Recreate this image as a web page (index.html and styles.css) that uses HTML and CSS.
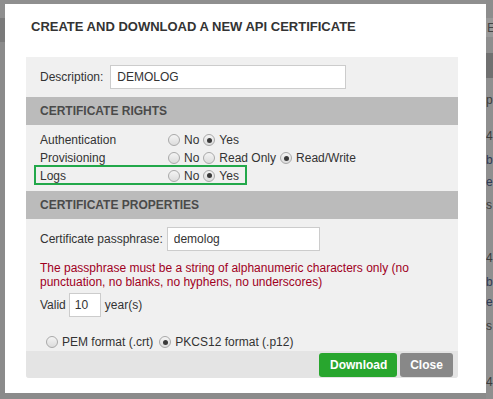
FILE: index.html
```html
<!DOCTYPE html>
<html>
<head>
<meta charset="utf-8">
<link rel="stylesheet" href="styles.css">
</head>
<body>
<div class="page">
  <div class="page-left">
    <div class="bg-top"></div>
    <div class="bg-nav"></div>
    <div class="bg-rest"></div>
  </div>
  <div class="page-right">
    <div class="pr-top"></div>
    <div class="pr-head">E</div>
    <div class="pr-gap"></div>
    <div class="pr-dark"></div>
    <div class="pr-list">
      <div class="pr-line l1">p</div>
      <div class="pr-line l2">4</div>
      <div class="pr-line l3 link">b</div>
      <div class="pr-line l4 link">e</div>
      <div class="pr-line l5">s</div>
      <div class="pr-line l6">4</div>
      <div class="pr-line l7 link">b</div>
      <div class="pr-line l8 link">e</div>
      <div class="pr-line l9">s</div>
      <div class="pr-line l10">4</div>
    </div>
  </div>
</div>

<div class="modal">
  <h1 class="modal-title">CREATE AND DOWNLOAD A NEW API CERTIFICATE</h1>
  <div class="panel">
    <div class="desc-row">
      <label class="desc-label">Description:</label>
      <input class="text-input desc-input" type="text" value="DEMOLOG">
    </div>
    <div class="band">CERTIFICATE RIGHTS</div>
    <div class="rights">
      <div class="right-row">
        <span class="right-label">Authentication</span>
        <span class="opt"><input type="radio" class="radio" name="auth"> No</span>
        <span class="opt"><input type="radio" class="radio" name="auth" checked> Yes</span>
      </div>
      <div class="right-row">
        <span class="right-label">Provisioning</span>
        <span class="opt"><input type="radio" class="radio" name="prov"> No</span>
        <span class="opt"><input type="radio" class="radio" name="prov"> Read Only</span>
        <span class="opt"><input type="radio" class="radio" name="prov" checked> Read/Write</span>
      </div>
      <div class="right-row highlight">
        <span class="right-label">Logs</span>
        <span class="opt"><input type="radio" class="radio" name="logs"> No</span>
        <span class="opt"><input type="radio" class="radio" name="logs" checked> Yes</span>
      </div>
    </div>
    <div class="band">CERTIFICATE PROPERTIES</div>
    <div class="props">
      <div class="pass-row">
        <label class="pass-label">Certificate passphrase:</label>
        <input class="text-input pass-input" type="text" value="demolog">
      </div>
      <p class="warning">The passphrase must be a string of alphanumeric characters only (no punctuation, no blanks, no hyphens, no underscores)</p>
      <div class="valid-row">
        <span>Valid</span>
        <input class="text-input valid-input" type="text" value="10">
        <span class="years">year(s)</span>
      </div>
      <div class="format-row">
        <span class="opt"><input type="radio" class="radio" name="fmt"> PEM format (.crt)</span>
        <span class="opt"><input type="radio" class="radio" name="fmt" checked> PKCS12 format (.p12)</span>
      </div>
    </div>
    <div class="footer">
      <button class="btn btn-download">Download</button>
      <button class="btn btn-close">Close</button>
    </div>
  </div>
</div>
</body>
</html>
```

FILE: styles.css
```css
* { box-sizing: border-box; }
html, body { margin: 0; padding: 0; }
body {
  width: 493px;
  height: 399px;
  overflow: hidden;
  background: #8b8b8b;
  font-family: "Liberation Sans", Arial, sans-serif;
  font-size: 12px;
  color: #333;
  position: relative;
}

/* background page (dimmed) */
.page {
  display: grid;
  grid-template-columns: 486px 1fr;
  height: 399px;
}
.page-left { display: flex; flex-direction: column; }
.bg-top { height: 18px; background: #8f8f8f; }
.bg-nav { height: 24px; background: #7a7a7a; }
.bg-rest { flex: 1; background: #8b8b8b; }

.page-right {
  display: flex;
  flex-direction: column;
  font-family: "Liberation Sans", Arial, sans-serif;
  font-size: 12px;
  color: #3c3c3c;
  overflow: hidden;
}
.pr-top { height: 18px; background: #8d8d8d; }
.pr-head { height: 19px; background: #9a9a9a; line-height: 20px; font-size: 13px; padding-left: 1px; color: #444; }
.pr-gap { height: 16px; background: #8e8e8e; }
.pr-dark { height: 25px; background: #707070; }
.pr-list { flex: 1; background: #8f8f8f; display: flex; flex-direction: column; padding-left: 0; }
.pr-line { height: 14px; line-height: 14px; }
.pr-line.link { color: #2f3a55; }
.l1 { margin-top: 15px; }
.l2 { margin-top: 22px; }
.l3 { margin-top: 10px; }
.l4 { margin-top: 8px; }
.l5 { margin-top: 9px; }
.l6 { margin-top: 39px; }
.l7 { margin-top: 10px; }
.l8 { margin-top: 6px; }
.l9 { margin-top: 10px; }
.l10 { margin-top: 42px; }

/* modal overlay */
.modal {
  position: absolute;
  left: 5px;
  top: 4px;
  width: 481px;
  height: 389px;
  background: #fff;
  padding: 14px 28px 0 21px;
}
.modal-title {
  margin: 0 0 0 5px;
  height: 39px;
  font-size: 13px;
  font-weight: bold;
  line-height: 18px;
  color: #333;
  letter-spacing: 0;
}

.panel {
  background: #f0f0f0;
  border-radius: 0 0 3px 3px;
  width: 432px;
}
.desc-row {
  height: 40px;
  display: flex;
  align-items: center;
  padding-left: 14px;
}
.desc-label { margin-right: 7px; }
.text-input {
  height: 24px;
  border: 1px solid #ccc;
  background: #fff;
  font-family: "Liberation Sans", Arial, sans-serif;
  font-size: 12px;
  color: #333;
  padding: 0 6px;
  outline: none;
  margin: 0;
}
.desc-input { width: 236px; }

.band {
  height: 28px;
  background: #bbbbbb;
  padding-left: 14px;
  line-height: 28px;
  font-weight: bold;
  color: #4a4a4a;
}

.rights {
  padding: 6px 0 6px 14px;
}
.right-row {
  display: flex;
  align-items: center;
  height: 18px;
}
.right-label { width: 128px; }
.opt {
  display: inline-flex;
  align-items: center;
  margin-right: 4px;
  white-space: nowrap;
}
.radio {
  appearance: none;
  -webkit-appearance: none;
  width: 12px;
  height: 12px;
  margin: 0 4px 0 0;
  border: 1px solid #a9a9a9;
  border-radius: 50%;
  background: linear-gradient(#f4f4f4, #dcdcdc);
  position: relative;
  flex: none;
}
.radio:checked::after {
  content: "";
  position: absolute;
  left: 2.5px;
  top: 2.5px;
  width: 5px;
  height: 5px;
  border-radius: 50%;
  background: #3a3a3a;
}
.highlight {
  width: fit-content;
  height: 20px;
  margin-left: -6px;
  margin-top: -2px;
  padding: 1px 2px 0 4px;
  border: 2px solid #22a84a;
  box-sizing: border-box;
}
.highlight .right-label { width: 128px; }

.props {
  padding: 8px 0 0 14px;
}
.pass-row {
  display: flex;
  align-items: center;
}
.pass-label { margin-right: 4px; }
.pass-input { width: 153px; }
.warning {
  margin: 10px 0 4px 0;
  color: #a0001e;
  line-height: 14px;
  padding-right: 10px;
}
.valid-row {
  display: flex;
  align-items: center;
  gap: 3px;
}
.valid-row .years { margin-left: 1px; }
.valid-input { width: 32px; padding: 0 5px; }
.format-row {
  display: flex;
  align-items: center;
  height: 18px;
  margin-top: 16px;
  padding-left: 6px;
}
.format-row .opt { margin-right: 6px; }

.footer {
  background: #e4e4e4;
  height: 27px;
  display: flex;
  justify-content: flex-end;
  align-items: flex-start;
  gap: 3px;
  padding: 2px 5px 0 0;
  border-radius: 0 0 3px 3px;
}
.btn {
  height: 24px;
  border: none;
  border-radius: 3px;
  color: #fff;
  font-family: "Liberation Sans", Arial, sans-serif;
  font-weight: bold;
  font-size: 12px;
  padding: 0 11px;
  margin: 0;
}
.btn-download { background: #28a62e; width: 78px; }
.btn-close { background: #888888; width: 53px; padding: 0 10px; }
```
